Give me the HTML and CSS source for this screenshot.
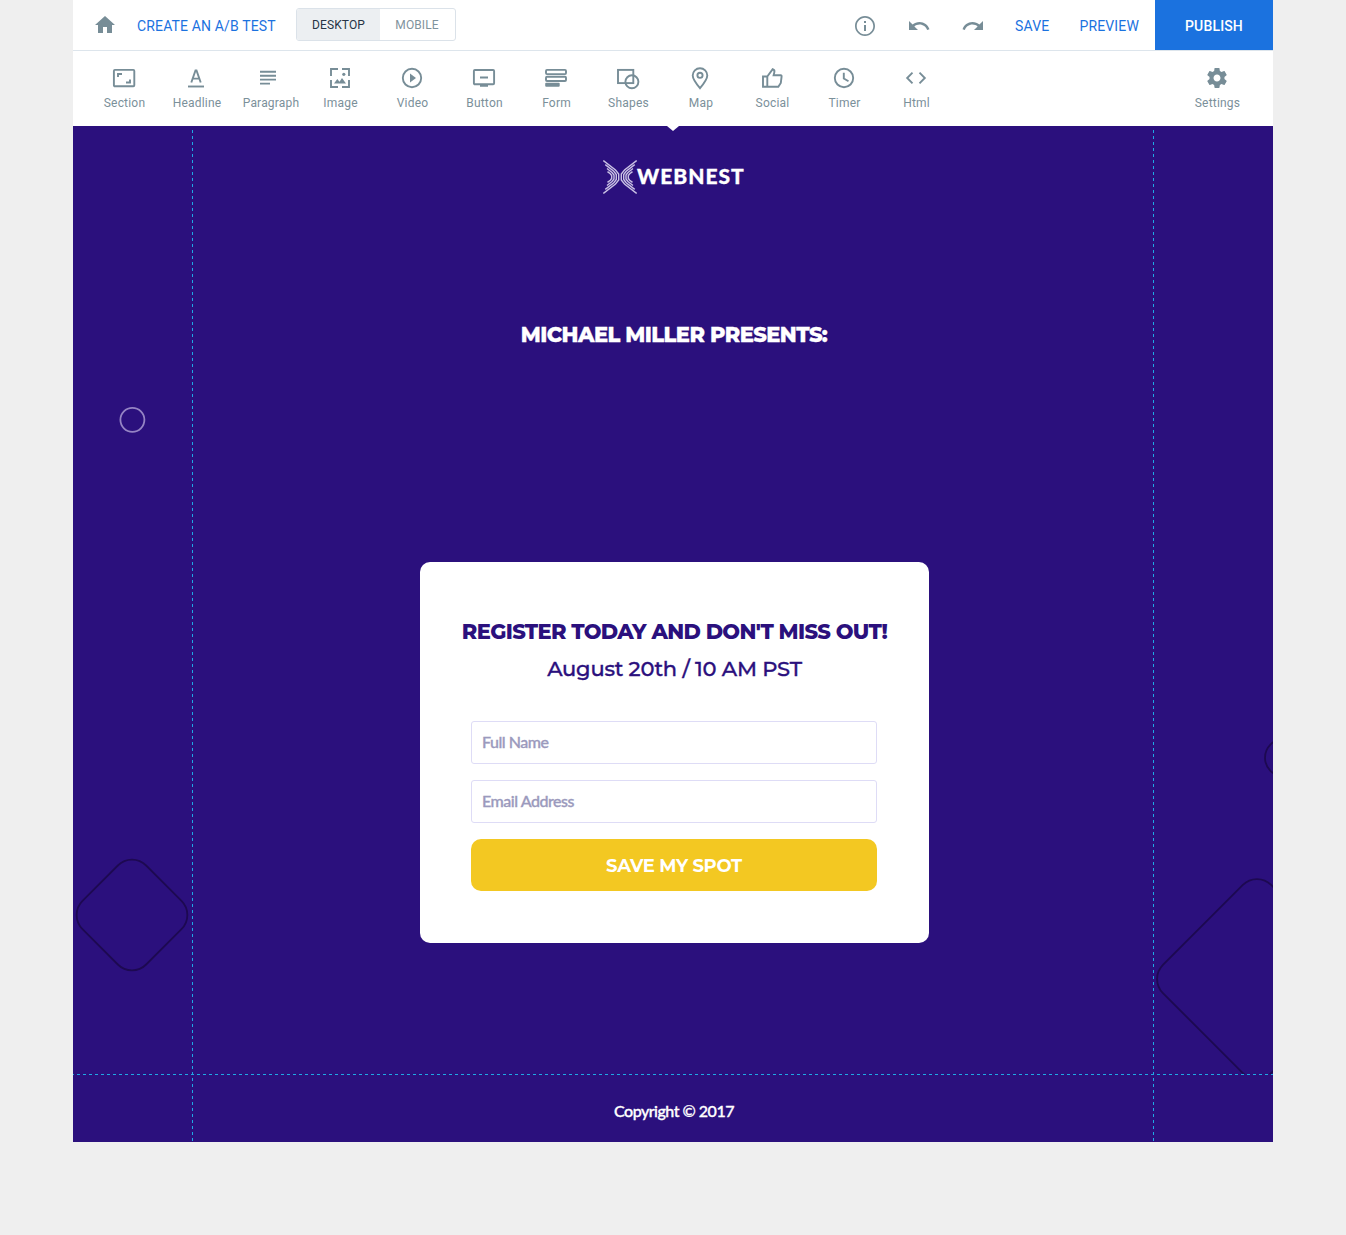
FILE: index.html
```html
<!DOCTYPE html>
<html lang="en">
<head>
<meta charset="utf-8">
<title>Page editor</title>
<link rel="stylesheet" href="styles.css">
</head>
<body>
<div class="app">
  <header class="topbar">
    <a class="home"><svg class="icon" viewBox="0 0 24 24"><path d="M10 20v-6h4v6h5v-8h3L12 3 2 12h3v8z"/></svg></a>
    <a class="ab-link">CREATE AN A/B TEST</a>
    <div class="toggle"><span class="toggle-item toggle-on">DESKTOP</span><span class="toggle-item">MOBILE</span></div>
    <div class="actions">
      <a class="action-icon"><svg class="icon" viewBox="0 0 24 24"><path d="M11 17h2v-6h-2v6zm1-15C6.480 2 2 6.480 2 12s4.480 10 10 10 10-4.480 10-10S17.520 2 12 2zm0 18.300c-4.580 0-8.300-3.720-8.300-8.300S7.420 3.700 12 3.700s8.300 3.720 8.300 8.300-3.720 8.300-8.300 8.300zM11 9h2V7h-2v2z"/></svg></a>
      <a class="action-icon"><svg class="icon" viewBox="0 0 24 24"><path d="M12.500 8c-2.650 0-5.050.990-6.900 2.600L2 7v9h9l-3.620-3.620c1.390-1.160 3.160-1.880 5.120-1.880 3.540 0 6.550 2.310 7.600 5.500l2.370-.780C21.080 11.030 17.150 8 12.500 8z"/></svg></a>
      <a class="action-icon"><svg class="icon" viewBox="0 0 24 24"><path d="M18.400 10.600C16.550 8.990 14.150 8 11.500 8c-4.650 0-8.580 3.030-9.960 7.220L3.900 16c1.050-3.190 4.050-5.500 7.600-5.500 1.950 0 3.730.720 5.120 1.880L13 16h9V7l-3.600 3.600z"/></svg></a>
      <a class="action">SAVE</a>
      <a class="action action-last">PREVIEW</a>
      <a class="publish">PUBLISH</a>
    </div>
  </header>

  <nav class="tools">
    <div class="tool"><svg class="icon line" viewBox="0 0 24 24"><rect x="1.900" y="3.900" width="20.400" height="16.400" rx="1"/><path d="M6 11V8h4M18 13.500v3h-4"/></svg><span>Section</span></div>
    <div class="tool tool-headline"><svg class="icon line" viewBox="0 0 24 24"><path d="M4 20.500h16"/><path d="M7.300 16.500L11.500 4.500h1L16.700 16.500M8.900 12.600h6.200"/></svg><span>Headline</span></div>
    <div class="tool tool-paragraph"><svg class="icon line" viewBox="0 0 24 24"><path d="M4 5.700h16M4 9.700h16M4 13.600h16M4 17.600h10"/></svg><span>Paragraph</span></div>
    <div class="tool"><svg class="icon line" viewBox="0 0 24 24"><path d="M10 3H3v7M14 3h7v7M3 14v7h7M14 21h7v-7"/><path class="solid" d="M6 17.500l3.300-4.500 2.200 2.700 2.500-3.700 4 5.500z"/><circle class="solid" cx="15.800" cy="8.300" r="1.600"/></svg><span>Image</span></div>
    <div class="tool"><svg class="icon line" viewBox="0 0 24 24"><circle cx="12" cy="12" r="9.200"/><path class="solid" d="M10 7.500v9l6-4.500z"/></svg><span>Video</span></div>
    <div class="tool"><svg class="icon line" viewBox="0 0 24 24"><rect x="1.900" y="4" width="20.200" height="14.300" rx="1"/><path d="M8 11.500h8M8 19.800h8"/></svg><span>Button</span></div>
    <div class="tool"><svg class="icon line" viewBox="0 0 24 24"><rect x="2" y="3.900" width="20" height="4.200" rx="1"/><rect x="2" y="10.800" width="20" height="4.200" rx="1"/><rect class="solid" x="1.200" y="16.800" width="14.500" height="4" rx="1"/></svg><span>Form</span></div>
    <div class="tool"><svg class="icon line" viewBox="0 0 24 24"><rect x="2" y="3.900" width="15.300" height="13.200"/><circle cx="15.900" cy="15.800" r="6.500"/></svg><span>Shapes</span></div>
    <div class="tool tool-map"><svg class="icon line" viewBox="0 0 24 24"><path d="M12 22.200C7.500 16.800 4.700 13 4.700 9.500a7.300 7.300 0 0 1 14.600 0c0 3.500-2.800 7.300-7.300 12.700z"/><circle cx="12" cy="9.300" r="2.600"/></svg><span>Map</span></div>
    <div class="tool"><svg class="icon line" viewBox="0 0 24 24"><path d="M7.300 10.500v10.300H3V10.500h4.300zM7.300 10.500L12.700 3.200c1.600.500 2 1.800 1.600 3.200l-.700 2.900h7.100c.7 0 1 .5.900 1.200l-.8 6.500-2.500 3.800H7.300"/></svg><span>Social</span></div>
    <div class="tool"><svg class="icon line" viewBox="0 0 24 24"><circle cx="12" cy="12" r="9.200"/><path d="M11.800 6.800v5.700l4.700 2.800"/></svg><span>Timer</span></div>
    <div class="tool"><svg class="icon line" viewBox="0 0 24 24"><path d="M8.500 6.700L3.200 12l5.300 5.300M15.500 6.700l5.300 5.300-5.300 5.300"/></svg><span>Html</span></div>
    <div class="tool tool-settings"><svg class="icon" viewBox="0 0 24 24"><path d="M19.430 12.980c.040-.320.070-.640.070-.980s-.030-.660-.070-.980l2.110-1.650c.190-.150.240-.420.120-.640l-2-3.460c-.120-.220-.390-.300-.610-.220l-2.490 1c-.520-.400-1.080-.730-1.690-.980l-.380-2.650C14.460 2.180 14.250 2 14 2h-4c-.250 0-.460.180-.490.420l-.380 2.650c-.610.250-1.170.590-1.690.980l-2.490-1c-.230-.090-.490 0-.610.220l-2 3.460c-.130.220-.070.490.120.640l2.110 1.650c-.040.320-.070.650-.070.980s.030.660.070.980l-2.110 1.650c-.190.150-.240.420-.120.640l2 3.460c.120.220.390.300.610.220l2.490-1c.520.400 1.080.730 1.690.980l.380 2.650c.030.240.240.420.490.420h4c.250 0 .460-.180.490-.420l.380-2.650c.610-.250 1.170-.590 1.690-.980l2.490 1c.230.090.490 0 .610-.220l2-3.460c.120-.220.070-.490-.120-.640l-2.110-1.650zM12 15.500c-1.930 0-3.500-1.570-3.500-3.500s1.570-3.500 3.500-3.500 3.500 1.570 3.500 3.500-1.570 3.500-3.500 3.500z"/></svg><span>Settings</span></div>
  </nav>

  <main class="canvas">
    <section class="hero">
      <svg class="shapes" viewBox="0 0 1200 948">
        <circle class="ring" cx="59.400" cy="293.800" r="12"/>
        <rect class="dark" x="14" y="744" width="90" height="90" rx="20" transform="rotate(45 59 789)"/>
        <circle class="dark" cx="1210.500" cy="631.700" r="18.500"/>
        <rect class="dark" x="1107.500" y="776.500" width="153" height="153" rx="20" transform="rotate(45 1184 853)"/>
      </svg>
      <div class="logo">
        <svg class="logo-mark" viewBox="0 0 34 34"><g id="wing"><path d="M.3.500L12.500 10 15.700 14v6L12.500 24 .3 33.500"/><path d="M2.300 4.600L10.800 11.300 13.300 14.500v5L10.800 22.700 2.300 29.400"/><path d="M4 8.500L9 12.500 11 15v4L9 21.500 4 25.500"/><path d="M4.500 11.600L7.300 13.800 8.700 15.600v2.800L7.300 20.200 4.500 22.400"/></g><use href="#wing" transform="matrix(-1 0 0 1 34 0)"/></svg>
        <span class="logo-text">WEBNEST</span>
      </div>
      <h1 class="headline">MICHAEL MILLER PRESENTS:</h1>
      <form class="card">
        <h2 class="card-title">REGISTER TODAY AND DON'T MISS OUT!</h2>
        <p class="card-date">August 20th / 10 AM PST</p>
        <div class="fields">
          <div class="field">Full Name</div>
          <div class="field">Email Address</div>
          <div class="submit"><span>SAVE MY SPOT</span></div>
        </div>
      </form>
    </section>
    <footer class="footer">Copyright © 2017</footer>
    <i class="notch"></i>
    <i class="guide guide-left"></i>
    <i class="guide guide-right"></i>
    <i class="guide-bottom"></i>
  </main>
</div>
</body>
</html>
```
FILE: styles.css
```css
* { box-sizing: border-box; }
body { margin: 0; background: #efefef; font-family: Roboto, sans-serif; }
.app { width: 1200px; margin: 0 auto; }

.icon { display: block; width: 24px; height: 24px; fill: #778d97; }
.line { fill: none; stroke: #778d97; stroke-width: 1.9; }
.solid { fill: #778d97; stroke: none; }

.topbar { display: flex; align-items: center; height: 51px; background: #fff; border-bottom: 1px solid #dde5ec; font-size: 14px; line-height: 48px; letter-spacing: .15px; color: #1b72df; }
.home { margin-left: 20px; }
.ab-link { margin-left: 20px; padding-top: 2px; white-space: nowrap; width: 159px; }
.toggle { display: flex; width: 160px; height: 33px; margin-bottom: 1px; border: 1px solid #dbe2e9; border-radius: 3px; overflow: hidden; font-size: 12px; line-height: 32px; letter-spacing: .1px; color: #7f939d; text-align: center; }
.toggle-item { flex: 1; padding-right: 1px; }
.toggle-on { flex: 0 0 83px; padding-right: 0; background: #eceff2; color: #263445; }
.actions { display: flex; margin-left: auto; height: 50px; align-items: center; }
.action-icon { display: flex; justify-content: center; width: 54px; padding-top: 1px; }
.action { padding: 2px 15px 0; }
.action-last { padding-right: 16px; }
.publish { width: 118px; height: 50px; padding-top: 2px; text-align: center; background: #1b72df; color: #fff; font-weight: 500; }

.tools { display: flex; height: 75px; padding: 15px 20px 0 15px; background: #fff; }
.tool { display: flex; flex-direction: column; align-items: center; width: 72px; font-size: 12px; line-height: 14px; letter-spacing: .2px; color: #7b909a; gap: 6px; }
.tool span { margin-left: 1px; }
.tool-headline span, .tool-map span { margin-left: 2px; }
.tool-paragraph span { margin-left: 6px; }
.tool-settings { margin-left: auto; }

.canvas { position: relative; height: 1015.500px; background: #2b107d; color: #fff; }
.hero { position: relative; display: flex; flex-direction: column; align-items: center; height: 948px; padding-top: 34px; }
.shapes { position: absolute; inset: 0; width: 1200px; height: 948px; fill: none; overflow: hidden; }
.ring { stroke: #9584c4; stroke-width: 1.8; }
.dark { stroke: #1d0951; stroke-width: 1.8; }
.logo { display: flex; align-items: center; height: 34px; width: 142px; margin-left: 2px; white-space: nowrap; }
.logo-mark { flex: none; width: 34px; height: 34px; fill: none; stroke: #c9c1e4; stroke-width: 1.4; }
.logo-text { padding-bottom: 2px; font: 900 21px/32px Lato, sans-serif; letter-spacing: 1px; -webkit-text-stroke: .3px; }
.headline { margin: 126px 0 0 2px; font: 800 21px/30px Montserrat, Inter, sans-serif; letter-spacing: -.55px; -webkit-text-stroke: .3px; }
.card { width: 509px; height: 381px; margin: 212px 0 0 3px; padding: 51px 0; background: #fff; border-radius: 10px; color: #2b107d; display: flex; flex-direction: column; align-items: center; z-index: 1; }
.card-title { margin: 0; white-space: nowrap; font: 800 21px/37px Montserrat, Inter, sans-serif; letter-spacing: -.66px; }
.card-date { margin: 0; font: 500 21px/37px Montserrat, Inter, sans-serif; letter-spacing: -.22px; -webkit-text-stroke: .35px; }
.fields { display: flex; flex-direction: column; gap: 16px; width: 406px; margin: 34px 1px 0 0; }
.field { height: 43px; padding-left: 10px; border: 1px solid #dedcf6; border-radius: 3px; font: 500 16px/40px Lato, sans-serif; letter-spacing: -.47px; -webkit-text-stroke: .35px; color: #9b9abd; }
.submit { height: 52px; border-radius: 10px; background: #f3c822; color: #fff; text-align: center; font: 700 18px/54px Montserrat, Inter, sans-serif; letter-spacing: -.35px; }
.footer { height: 67px; padding-left: 2px; text-align: center; font: 500 16px/74px Lato, sans-serif; letter-spacing: -.5px; -webkit-text-stroke: .35px; }

.notch { position: absolute; left: 594px; top: 0; border: solid transparent; border-width: 5px 6px 0; border-top-color: #fff; }
.guide { position: absolute; top: 4px; bottom: 0; width: 1px; background: repeating-linear-gradient(#1fa8e4 0 3px, transparent 3px 6px); }
.guide-left { left: 119px; }
.guide-right { left: 1080px; }
.guide-bottom { position: absolute; left: 0; right: 0; top: 948px; height: 1px; background: repeating-linear-gradient(90deg, #1fa8e4 0 3px, transparent 3px 6px) -2px 0; }
```
